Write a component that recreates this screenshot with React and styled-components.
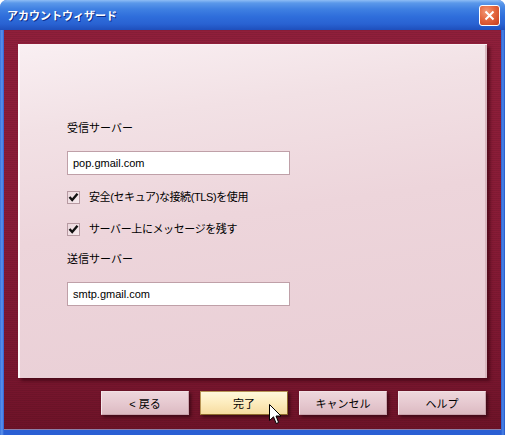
import styled, { createGlobalStyle } from 'styled-components';

const GlobalStyle = createGlobalStyle`
  html, body {
    margin: 0;
    padding: 0;
    background: #fff;
  }
  body {
    font-family: 'Liberation Sans', 'Noto Sans CJK JP', sans-serif;
  }
`;

const Window = styled.div`
  position: relative;
  width: 505px;
  height: 435px;
  display: flex;
  flex-direction: column;
  border-radius: 7px 7px 0 0;
  overflow: hidden;
  background: linear-gradient(90deg, #3a72dc 0, #5d93ec 2px, #2a5fd4 4px, #2a5fd4 501px, #4c86e8 503px, #2355c6 505px);
`;

const TitleBar = styled.div`
  flex: none;
  height: 30px;
  display: flex;
  align-items: center;
  justify-content: space-between;
  padding: 0 5px 0 7px;
  background: linear-gradient(
    #8ebdf5 0%,
    #5a98ea 10%,
    #3f80e2 30%,
    #2f6edb 55%,
    #2962d2 80%,
    #1f4fbc 100%
  );
`;

const Title = styled.span`
  color: #fff;
  font-size: 11px;
  font-weight: bold;
  text-shadow: 1px 1px 0 #0c2e8a;
`;

const CloseButton = styled.div`
  width: 19px;
  height: 19px;
  border: 1px solid #fff;
  border-radius: 3px;
  display: flex;
  align-items: center;
  justify-content: center;
  background: radial-gradient(circle at 35% 30%, #f39a78 0%, #e4673f 45%, #c63c1c 100%);
`;

const Body = styled.div`
  flex: 1;
  margin: 0 4px 5px;
  display: flex;
  flex-direction: column;
  padding: 14px 14px 0;
  background:
    repeating-linear-gradient(180deg, rgba(0, 0, 0, 0.07) 0 1px, transparent 1px 2px),
    linear-gradient(#901f3b 0%, #881b36 50%, #7a162f 85%, #6e1328 100%);
  box-shadow: inset 0 -1px 0 rgba(160, 200, 255, 0.6);
`;

const Panel = styled.div`
  height: 334px;
  box-sizing: border-box;
  display: flex;
  flex-direction: column;
  align-items: flex-start;
  padding: 75px 0 0 47px;
  border-left: 2px solid #fdf6f8;
  border-top: 1px solid #faf1f3;
  background: linear-gradient(172deg, #f9eff2 0%, #f2e1e5 22%, #edd5db 50%, #e9ced5 100%);
  box-shadow: 3px 3px 3px rgba(50, 0, 12, 0.55), inset -2px 0 0 #d9b7bf;
`;

const Label = styled.div`
  font-size: 11px;
  line-height: 16px;
  color: #000;
  margin-top: ${(p) => p.$top || 0}px;
`;

const TextBox = styled.div`
  margin-top: 15px;
  width: 223px;
  height: 24px;
  box-sizing: border-box;
  display: flex;
  align-items: center;
  padding-left: 5px;
  background: #fff;
  border: 1px solid #bfa0a8;
  font-size: 11px;
  color: #000;
`;

const CheckRow = styled.div`
  margin-top: ${(p) => p.$top}px;
  display: flex;
  align-items: center;
  gap: 9px;
  font-size: 11px;
  line-height: 16px;
  letter-spacing: -0.4px;
  color: #000;
`;

const Box = styled.span`
  width: 13px;
  height: 13px;
  box-sizing: border-box;
  border: 1px solid #b79aa2;
  background: linear-gradient(135deg, #ecd8dd, #f6eaed);
  display: flex;
  align-items: center;
  justify-content: center;
`;

const ButtonRow = styled.div`
  margin-top: 13px;
  padding-right: 1px;
  display: flex;
  justify-content: flex-end;
  gap: 11px;
`;

const Button = styled.div`
  width: 88px;
  height: 24px;
  box-sizing: border-box;
  display: flex;
  align-items: center;
  justify-content: center;
  font-size: 11px;
  color: #000;
  border: 1px solid ${(p) => (p.$primary ? '#8d6a2c' : '#c9a2ab')};
  border-top-color: ${(p) => (p.$primary ? '#b89456' : '#f2e0e4')};
  border-left-color: ${(p) => (p.$primary ? '#b89456' : '#f5e6ea')};
  background: ${(p) =>
    p.$primary
      ? 'linear-gradient(#fff8dc 0%, #fdedc0 45%, #f6dca0 100%)'
      : 'linear-gradient(#edd7dc 0%, #e6c9d0 50%, #dcbac2 100%)'};
  box-shadow: 2px 2px 3px rgba(30, 0, 8, 0.6);
`;

const Pointer = styled.svg`
  position: absolute;
  left: 269px;
  top: 404px;
`;

const Check = () => (
  <Box>
    <svg width="11" height="11" viewBox="0 0 11 11">
      <polyline points="1.5,5 4.2,8 9.5,1.8" fill="none" stroke="#111" strokeWidth="2.4" />
    </svg>
  </Box>
);

export default function App() {
  return (
    <>
      <GlobalStyle />
      <Window>
        <TitleBar>
          <Title>アカウントウィザード</Title>
          <CloseButton>
            <svg width="11" height="11" viewBox="0 0 11 11">
              <path d="M1.5 1.5 L9.5 9.5 M9.5 1.5 L1.5 9.5" stroke="#fff" strokeWidth="2" />
            </svg>
          </CloseButton>
        </TitleBar>
        <Body>
          <Panel>
            <Label>受信サーバー</Label>
            <TextBox>pop.gmail.com</TextBox>
            <CheckRow $top={14}>
              <Check />
              安全(セキュア)な接続(TLS)を使用
            </CheckRow>
            <CheckRow $top={16}>
              <Check />
              サーバー上にメッセージを残す
            </CheckRow>
            <Label $top={14}>送信サーバー</Label>
            <TextBox>smtp.gmail.com</TextBox>
          </Panel>
          <ButtonRow>
            <Button>&lt; 戻る</Button>
            <Button $primary>完了</Button>
            <Button>キャンセル</Button>
            <Button>ヘルプ</Button>
          </ButtonRow>
        </Body>
        <Pointer width="13" height="21" viewBox="0 0 13 21">
          <path
            d="M0.5 0.5 L0.5 16.5 L4.5 12.8 L7.2 19.5 L9.6 18.5 L7 12 L12 12 Z"
            fill="#fff"
            stroke="#000"
            strokeWidth="1"
          />
        </Pointer>
      </Window>
    </>
  );
}
